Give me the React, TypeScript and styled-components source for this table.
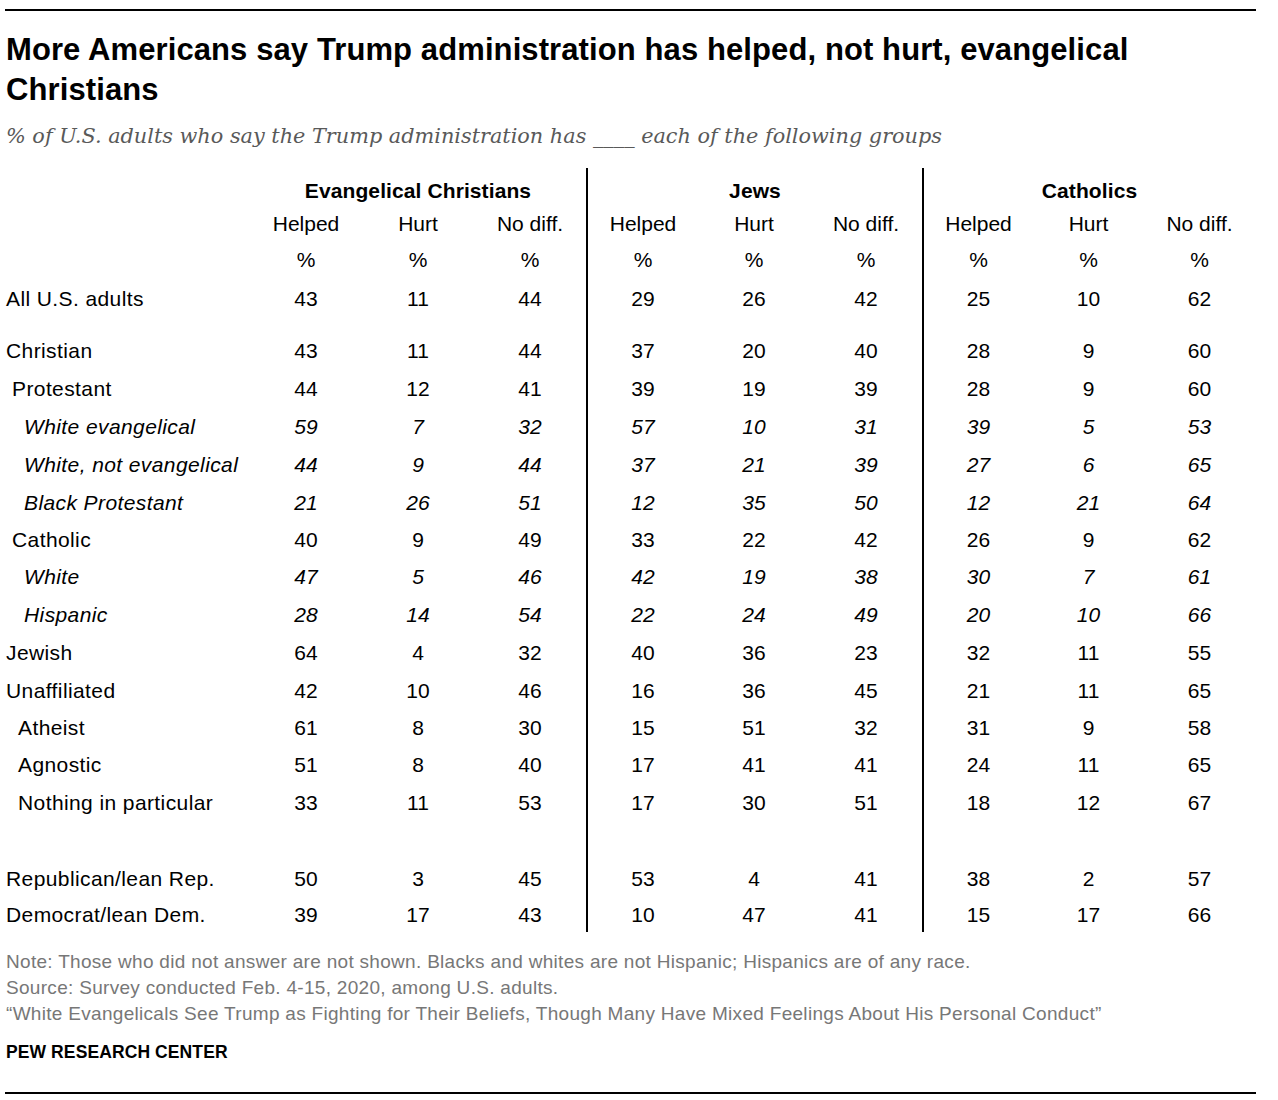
import React from "react";
import styled, { createGlobalStyle } from "styled-components";

const GlobalStyle = createGlobalStyle`
  html, body { margin: 0; padding: 0; background: #ffffff; }
  body { font-family: "Liberation Sans", Arial, sans-serif; color: #000; }
`;

const Page = styled.div`
  width: 1251px;
  margin-left: 5px;
  padding-top: 9px;
`;

const Rule = styled.div`
  height: 2px;
  background: #000;
`;

const Title = styled.h1`
  margin: 19px 0 0 1px;
  font-family: "Liberation Sans", Arial, sans-serif;
  font-weight: 700;
  font-size: 31px;
  line-height: 40px;
  letter-spacing: 0.1px;
  color: #000;
`;

const Subtitle = styled.p`
  margin: 11px 0 0 1px;
  font-family: "DejaVu Serif", Georgia, serif;
  font-style: italic;
  font-size: 20.8px;
  line-height: 30px;
  color: #595959;
`;

const Table = styled.div`
  margin-top: 17px;
  display: flex;
  flex-direction: column;
`;

const Row = styled.div<{ $h: number }>`
  display: grid;
  grid-template-columns: 245px repeat(6, 112px) repeat(3, 111px);
  height: ${(p) => p.$h}px;
  font-size: 21px;
`;

const Cell = styled.div<{ $divider?: boolean; $italic?: boolean }>`
  display: flex;
  align-items: center;
  justify-content: center;
  line-height: 24px;
  box-sizing: border-box;
  border-left: ${(p) => (p.$divider ? "2px solid #000" : "0")};
  font-style: ${(p) => (p.$italic ? "italic" : "normal")};
`;

const LabelCell = styled.div<{ $indent: number; $italic?: boolean }>`
  display: flex;
  align-items: center;
  padding-left: ${(p) => 1 + p.$indent}px;
  line-height: 24px;
  letter-spacing: 0.4px;
  white-space: nowrap;
  font-style: ${(p) => (p.$italic ? "italic" : "normal")};
`;

const GroupHead = styled.div<{ $divider?: boolean }>`
  grid-column: span 3;
  box-sizing: border-box;
  border-left: ${(p) => (p.$divider ? "2px solid #000" : "0")};
  padding-top: 11px;
  text-align: center;
  font-weight: 700;
  line-height: 24px;
  letter-spacing: 0.1px;
`;

const Notes = styled.div`
  margin: 17px 0 0 1px;
  font-size: 19px;
  line-height: 26px;
  letter-spacing: 0.3px;
  color: #777;
`;

const Brand = styled.div`
  margin: 12px 0 0 1px;
  font-size: 17.5px;
  font-weight: 700;
  line-height: 26px;
  letter-spacing: 0.1px;
  color: #000;
`;

const BottomRule = styled(Rule)`
  margin-top: 27px;
`;

type DataRow = {
  label: string;
  indent: number;
  italic?: boolean;
  h: number;
  v: number[];
  spacerAfter?: number;
};

const rows: DataRow[] = [
  { label: "All U.S. adults", indent: 0, h: 38, v: [43, 11, 44, 29, 26, 42, 25, 10, 62], spacerAfter: 14 },
  { label: "Christian", indent: 0, h: 38, v: [43, 11, 44, 37, 20, 40, 28, 9, 60] },
  { label: "Protestant", indent: 6, h: 38, v: [44, 12, 41, 39, 19, 39, 28, 9, 60] },
  { label: "White evangelical", indent: 18, italic: true, h: 38, v: [59, 7, 32, 57, 10, 31, 39, 5, 53] },
  { label: "White, not evangelical", indent: 18, italic: true, h: 38, v: [44, 9, 44, 37, 21, 39, 27, 6, 65] },
  { label: "Black Protestant", indent: 18, italic: true, h: 38, v: [21, 26, 51, 12, 35, 50, 12, 21, 64] },
  { label: "Catholic", indent: 6, h: 36, v: [40, 9, 49, 33, 22, 42, 26, 9, 62] },
  { label: "White", indent: 18, italic: true, h: 38, v: [47, 5, 46, 42, 19, 38, 30, 7, 61] },
  { label: "Hispanic", indent: 18, italic: true, h: 38, v: [28, 14, 54, 22, 24, 49, 20, 10, 66] },
  { label: "Jewish", indent: 0, h: 38, v: [64, 4, 32, 40, 36, 23, 32, 11, 55] },
  { label: "Unaffiliated", indent: 0, h: 38, v: [42, 10, 46, 16, 36, 45, 21, 11, 65] },
  { label: "Atheist", indent: 12, h: 36, v: [61, 8, 30, 15, 51, 32, 31, 9, 58] },
  { label: "Agnostic", indent: 12, h: 38, v: [51, 8, 40, 17, 41, 41, 24, 11, 65] },
  { label: "Nothing in particular", indent: 12, h: 38, v: [33, 11, 53, 17, 30, 51, 18, 12, 67], spacerAfter: 38 },
  { label: "Republican/lean Rep.", indent: 0, h: 38, v: [50, 3, 45, 53, 4, 41, 38, 2, 57] },
  { label: "Democrat/lean Dem.", indent: 0, h: 34, v: [39, 17, 43, 10, 47, 41, 15, 17, 66] },
];

const groups = ["Evangelical Christians", "Jews", "Catholics"];
const subs = ["Helped", "Hurt", "No diff."];
const cols = [0, 1, 2, 3, 4, 5, 6, 7, 8];
const isDivider = (i: number) => i === 3 || i === 6;

const EmptyCells: React.FC = () => (
  <>
    {cols.map((i) => (
      <Cell key={i} $divider={isDivider(i)} />
    ))}
  </>
);

export default function App() {
  return (
    <>
      <GlobalStyle />
      <Page>
        <Rule />
        <Title>More Americans say Trump administration has helped, not hurt, evangelical Christians</Title>
        <Subtitle>% of U.S. adults who say the Trump administration has ____ each of the following groups</Subtitle>
        <Table>
          <Row $h={39}>
            <div />
            {groups.map((g, i) => (
              <GroupHead key={g} $divider={i > 0}>
                {g}
              </GroupHead>
            ))}
          </Row>
          <Row $h={33}>
            <div />
            {cols.map((i) => (
              <Cell key={i} $divider={isDivider(i)}>
                {subs[i % 3]}
              </Cell>
            ))}
          </Row>
          <Row $h={40}>
            <div />
            {cols.map((i) => (
              <Cell key={i} $divider={isDivider(i)}>
                %
              </Cell>
            ))}
          </Row>
          {rows.map((r) => (
            <React.Fragment key={r.label}>
              <Row $h={r.h}>
                <LabelCell $indent={r.indent} $italic={r.italic}>
                  {r.label}
                </LabelCell>
                {r.v.map((n, i) => (
                  <Cell key={i} $divider={isDivider(i)} $italic={r.italic}>
                    {n}
                  </Cell>
                ))}
              </Row>
              {r.spacerAfter ? (
                <Row $h={r.spacerAfter}>
                  <div />
                  <EmptyCells />
                </Row>
              ) : null}
            </React.Fragment>
          ))}
        </Table>
        <Notes>
          Note: Those who did not answer are not shown. Blacks and whites are not Hispanic; Hispanics are of any race.
          <br />
          Source: Survey conducted Feb. 4-15, 2020, among U.S. adults.
          <br />
          “White Evangelicals See Trump as Fighting for Their Beliefs, Though Many Have Mixed Feelings About His Personal Conduct”
        </Notes>
        <Brand>PEW RESEARCH CENTER</Brand>
        <BottomRule />
      </Page>
    </>
  );
}
